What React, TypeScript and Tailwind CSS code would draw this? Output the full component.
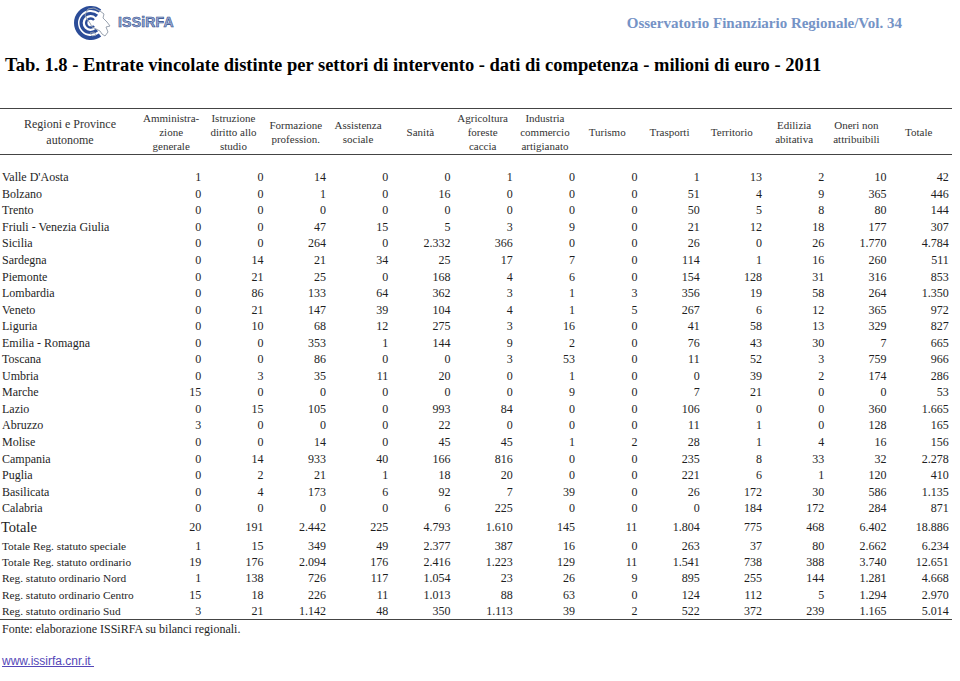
import React from "react";

const headers: string[][] = [
  ["Amministra-", "zione", "generale"],
  ["Istruzione", "diritto allo", "studio"],
  ["Formazione", "profession."],
  ["Assistenza", "sociale"],
  ["Sanità"],
  ["Agricoltura", "foreste", "caccia"],
  ["Industria", "commercio", "artigianato"],
  ["Turismo"],
  ["Trasporti"],
  ["Territorio"],
  ["Edilizia", "abitativa"],
  ["Oneri non", "attribuibili"],
  ["Totale"],
];

const rows: [string, string][] = [
  ["Valle D'Aosta", "1 0 14 0 0 1 0 0 1 13 2 10 42"],
  ["Bolzano", "0 0 1 0 16 0 0 0 51 4 9 365 446"],
  ["Trento", "0 0 0 0 0 0 0 0 50 5 8 80 144"],
  ["Friuli - Venezia Giulia", "0 0 47 15 5 3 9 0 21 12 18 177 307"],
  ["Sicilia", "0 0 264 0 2.332 366 0 0 26 0 26 1.770 4.784"],
  ["Sardegna", "0 14 21 34 25 17 7 0 114 1 16 260 511"],
  ["Piemonte", "0 21 25 0 168 4 6 0 154 128 31 316 853"],
  ["Lombardia", "0 86 133 64 362 3 1 3 356 19 58 264 1.350"],
  ["Veneto", "0 21 147 39 104 4 1 5 267 6 12 365 972"],
  ["Liguria", "0 10 68 12 275 3 16 0 41 58 13 329 827"],
  ["Emilia - Romagna", "0 0 353 1 144 9 2 0 76 43 30 7 665"],
  ["Toscana", "0 0 86 0 0 3 53 0 11 52 3 759 966"],
  ["Umbria", "0 3 35 11 20 0 1 0 0 39 2 174 286"],
  ["Marche", "15 0 0 0 0 0 9 0 7 21 0 0 53"],
  ["Lazio", "0 15 105 0 993 84 0 0 106 0 0 360 1.665"],
  ["Abruzzo", "3 0 0 0 22 0 0 0 11 1 0 128 165"],
  ["Molise", "0 0 14 0 45 45 1 2 28 1 4 16 156"],
  ["Campania", "0 14 933 40 166 816 0 0 235 8 33 32 2.278"],
  ["Puglia", "0 2 21 1 18 20 0 0 221 6 1 120 410"],
  ["Basilicata", "0 4 173 6 92 7 39 0 26 172 30 586 1.135"],
  ["Calabria", "0 0 0 0 6 225 0 0 0 184 172 284 871"],
];

const totale = "20 191 2.442 225 4.793 1.610 145 11 1.804 775 468 6.402 18.886";

const subRows: [string, string][] = [
  ["Totale Reg. statuto speciale", "1 15 349 49 2.377 387 16 0 263 37 80 2.662 6.234"],
  ["Totale Reg. statuto ordinario", "19 176 2.094 176 2.416 1.223 129 11 1.541 738 388 3.740 12.651"],
  ["Reg. statuto ordinario Nord", "1 138 726 117 1.054 23 26 9 895 255 144 1.281 4.668"],
  ["Reg. statuto ordinario Centro", "15 18 226 11 1.013 88 63 0 124 112 5 1.294 2.970"],
  ["Reg. statuto ordinario Sud", "3 21 1.142 48 350 1.113 39 2 522 372 239 1.165 5.014"],
];

const grid = "grid grid-cols-[140px_repeat(13,62.3px)]";

function Logo() {
  return (
    <div className="flex items-center gap-[4px]">
      <svg width="44" height="36" viewBox="0 0 44 36">
        <path d="M30 6 A15 15 0 1 0 30 30" fill="none" stroke="#2b4c98" strokeWidth="4" />
        <path d="M27 11 A9.5 9.5 0 1 0 27 25" fill="none" stroke="#2b4c98" strokeWidth="3.2" />
        <path d="M24 15 A4.5 4.5 0 1 0 24 21" fill="none" stroke="#2b4c98" strokeWidth="2.4" />
        <path
          d="M18 4 L24 3 L30 6 L34 9 L33 13 L37 17 L40 21 L36 22 L38 27 L35 31 L32 29 L30 26 L26 24 L22 22 L20 18 L17 14 L15 10 Z"
          fill="none"
          stroke="#9aa3b0"
          strokeWidth="1"
        />
        <path d="M20 28 L24 27 L26 30 L22 31 Z" fill="none" stroke="#9aa3b0" strokeWidth="0.8" />
      </svg>
      <span className="text-[14px] font-bold text-[#9db0d6] [font-family:'Liberation_Sans',Arial,sans-serif] [-webkit-text-stroke:0.6px_#2f4a8a] tracking-[0.2px]">
        ISSiRFA
      </span>
    </div>
  );
}

export default function App() {
  return (
    <div className="w-[960px] h-[681px] bg-white overflow-hidden [font-family:'Liberation_Serif','Times_New_Roman',serif] text-[#1e1e1e]">
      {/* Top header */}
      <div className="flex items-center justify-between pl-[70px] pr-[58px] pt-[4px] h-[41px]">
        <Logo />
        <div className="text-[15px] font-bold text-[#7593c6] pt-[1px]">
          Osservatorio Finanziario Regionale/Vol. 34
        </div>
      </div>

      {/* Title */}
      <div className="pl-[5px] pt-[13px] h-[67px] text-[18.5px] font-bold text-black leading-[22px] whitespace-nowrap">
        Tab. 1.8 - Entrate vincolate distinte per settori di intervento - dati di competenza - milioni di euro - 2011
      </div>

      {/* Table */}
      <div className="w-[952px]">
        <div className={`${grid} border-t-[1.5px] border-b-[1.5px] border-[#444] h-[47px] items-center text-[#333]`}>
          <div className="text-center text-[12px] leading-[16px]">
            Regioni e Province
            <br />
            autonome
          </div>
          {headers.map((h, i) => (
            <div key={i} className="text-center text-[11px] leading-[14px] pt-[1px] whitespace-nowrap">
              {h.map((l, j) => (
                <div key={j}>{l}</div>
              ))}
            </div>
          ))}
        </div>

        <div className="h-[14px]" />

        {rows.map(([name, vals]) => (
          <div key={name} className={`${grid} h-[16.55px] items-center text-[12px] leading-[14px]`}>
            <div className="pl-[2px] whitespace-nowrap">{name}</div>
            {vals.split(" ").map((v, i) => (
              <div key={i} className="text-right pr-[1px]">
                {v}
              </div>
            ))}
          </div>
        ))}

        <div className={`${grid} h-[21px] items-center text-[12px] leading-[14px]`}>
          <div className="pl-[1px] text-[14.5px]">Totale</div>
          {totale.split(" ").map((v, i) => (
            <div key={i} className="text-right pr-[1px]">
              {v}
            </div>
          ))}
        </div>

        <div className="border-b-[1.5px] border-[#444]">
          {subRows.map(([name, vals]) => (
            <div key={name} className={`${grid} h-[16.3px] items-center text-[12px] leading-[14px]`}>
              <div className="pl-[2px] text-[11.3px] whitespace-nowrap">{name}</div>
              {vals.split(" ").map((v, i) => (
                <div key={i} className="text-right pr-[1px]">
                  {v}
                </div>
              ))}
            </div>
          ))}
        </div>
      </div>

      <div className="pl-[2px] pt-[1px] text-[12px] leading-[16px]">
        Fonte: elaborazione ISSiRFA su bilanci regionali.
      </div>

      <div className="pl-[2px] pt-[16px] text-[12px] leading-[16px] [font-family:'Liberation_Sans',Arial,sans-serif]">
        <a className="text-[#5547b8] underline">www.issirfa.cnr.it&nbsp;</a>
      </div>
    </div>
  );
}
